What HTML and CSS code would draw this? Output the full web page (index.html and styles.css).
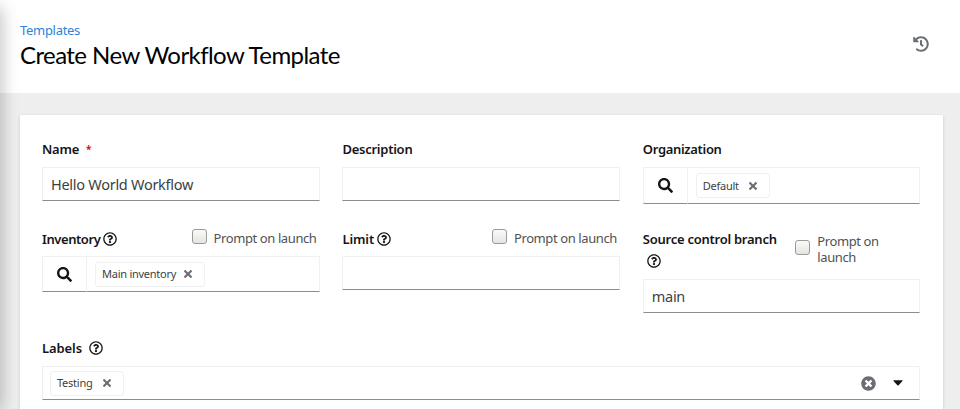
FILE: index.html
```html
<!DOCTYPE html>
<html lang="en">
<head>
<meta charset="utf-8">
<title>Create New Workflow Template</title>
<link rel="stylesheet" href="styles.css">
</head>
<body>
<svg class="sprite" aria-hidden="true">
  <symbol id="search" viewBox="0 0 512 512"><path d="M505 442.7L405.3 343c-4.5-4.5-10.6-7-17-7H372c27.6-35.3 44-79.7 44-128C416 93.1 322.9 0 208 0S0 93.1 0 208s93.1 208 208 208c48.3 0 92.7-16.4 128-44v16.3c0 6.4 2.5 12.5 7 17l99.7 99.7c9.4 9.4 24.6 9.4 33.9 0l28.3-28.3c9.4-9.4 9.4-24.6.1-34zM208 336c-70.7 0-128-57.2-128-128 0-70.7 57.2-128 128-128 70.7 0 128 57.2 128 128 0 70.7-57.2 128-128 128z"/></symbol>
  <symbol id="times" viewBox="0 80 352 352"><path d="M242.72 256l100.07-100.07c12.28-12.28 12.28-32.19 0-44.48l-22.24-22.24c-12.28-12.28-32.19-12.28-44.48 0L176 189.28 75.93 89.21c-12.28-12.28-32.19-12.28-44.48 0L9.21 111.45c-12.28 12.28-12.28 32.19 0 44.48L109.28 256 9.21 356.07c-12.28 12.28-12.28 32.19 0 44.48l22.24 22.24c12.28 12.28 32.2 12.28 44.48 0L176 322.72l100.07 100.07c12.28 12.28 32.2 12.28 44.48 0l22.24-22.24c12.28-12.28 12.28-32.19 0-44.48L242.72 256z"/></symbol>
  <symbol id="times-circle" viewBox="0 0 512 512"><path d="M256 8C119 8 8 119 8 256s111 248 248 248 248-111 248-248S393 8 256 8zm121.6 313.1c4.7 4.7 4.7 12.3 0 17L338 377.6c-4.7 4.7-12.3 4.7-17 0L256 312l-65.1 65.6c-4.7 4.7-12.3 4.7-17 0L134.4 338c-4.7-4.7-4.7-12.3 0-17l65.6-65-65.6-65.1c-4.7-4.7-4.7-12.3 0-17l39.6-39.6c4.7-4.7 12.3-4.7 17 0l65 65.7 65.1-65.6c4.7-4.7 12.3-4.7 17 0l39.6 39.6c4.7 4.7 4.7 12.3 0 17L312 256l65.6 65.1z"/></symbol>
  <symbol id="question" viewBox="0 0 512 512"><path d="M256 8C119.043 8 8 119.083 8 256c0 136.997 111.043 248 248 248s248-111.003 248-248C504 119.083 392.957 8 256 8zm0 448c-110.532 0-200-89.431-200-200 0-110.495 89.472-200 200-200 110.491 0 200 89.471 200 200 0 110.53-89.431 200-200 200zm107.244-255.2c0 67.052-72.421 68.084-72.421 92.863V300c0 6.627-5.373 12-12 12h-45.647c-6.627 0-12-5.373-12-12v-8.659c0-35.745 27.1-50.034 47.579-61.516 17.561-9.845 28.324-16.541 28.324-29.579 0-17.246-21.999-28.693-39.784-28.693-23.189 0-33.894 10.977-48.942 29.969-4.057 5.12-11.46 6.071-16.666 2.124l-27.824-21.098c-5.107-3.872-6.251-11.066-2.644-16.363C184.846 131.491 214.94 112 261.794 112c49.071 0 101.45 38.304 101.45 88.8zM298 368c0 23.159-18.841 42-42 42s-42-18.841-42-42 18.841-42 42-42 42 18.841 42 42z"/></symbol>
  <symbol id="history" viewBox="0 0 512 512"><path d="M504 255.531c.253 136.64-111.18 248.372-247.82 248.468-59.015.042-113.223-20.53-155.822-54.911-11.077-8.94-11.905-25.541-1.839-35.607l11.267-11.267c8.609-8.609 22.353-9.551 31.891-1.984C173.062 425.135 212.781 440 256 440c101.705 0 184-82.311 184-184 0-101.705-82.311-184-184-184-48.814 0-93.149 18.969-126.068 49.932l50.754 50.754c10.08 10.08 2.941 27.314-11.313 27.314H24c-8.837 0-16-7.163-16-16V38.627c0-14.254 17.234-21.393 27.314-11.314l49.372 49.372C129.209 34.136 189.552 8 256 8c136.81 0 247.747 110.78 248 247.531zm-180.912 78.784l9.823-12.63c8.138-10.463 6.253-25.542-4.21-33.679L288 256.349V152c0-13.255-10.745-24-24-24h-16c-13.255 0-24 10.745-24 24v135.651l65.409 50.874c10.463 8.137 25.541 6.253 33.679-4.21z"/></symbol>
  <symbol id="caret" viewBox="0 0 10 6"><path d="M.8.3h8.4q.8.2.3.8L5.6 5.2q-.6.6-1.2 0L.5 1.100Q0 .5.8.3z"/></symbol>
</svg>
<header class="header">
  <div>
    <a class="crumb">Templates</a>
    <h1 class="title">Create New Workflow Template</h1>
  </div>
  <svg class="icon history"><use href="#history"/></svg>
</header>
<main class="card">
  <div class="field">
    <div class="head first"><label class="label">Name</label><span class="required">*</span></div>
    <div class="control"><span class="value">Hello World Workflow</span></div>
  </div>
  <div class="field">
    <div class="head first"><label class="label">Description</label></div>
    <div class="control"></div>
  </div>
  <div class="field">
    <div class="head first"><label class="label org">Organization</label></div>
    <div class="lookup org-lookup">
      <button class="search"><svg class="icon"><use href="#search"/></svg></button>
      <div class="chips"><span class="chip chip-default"><span class="chip-text">Default</span><svg class="icon times"><use href="#times"/></svg></span></div>
    </div>
  </div>

  <div class="field">
    <div class="head"><label class="label inventory">Inventory</label><svg class="icon help"><use href="#question"/></svg>
      <label class="prompt"><span class="box"></span><span class="prompt-text">Prompt on launch</span></label></div>
    <div class="lookup">
      <button class="search"><svg class="icon"><use href="#search"/></svg></button>
      <div class="chips"><span class="chip chip-main"><span class="chip-text">Main inventory</span><svg class="icon times"><use href="#times"/></svg></span></div>
    </div>
  </div>
  <div class="field">
    <div class="head"><label class="label limit">Limit</label><svg class="icon help"><use href="#question"/></svg>
      <label class="prompt"><span class="box"></span><span class="prompt-text">Prompt on launch</span></label></div>
    <div class="control"></div>
  </div>
  <div class="field">
    <div class="head tall">
      <div class="stack"><label class="label source">Source control branch</label><svg class="icon help"><use href="#question"/></svg></div>
      <label class="prompt wrapped"><span class="box"></span><span class="prompt-text">Prompt on launch</span></label></div>
    <div class="control"><span class="value main">main</span></div>
  </div>

  <div class="field wide">
    <div class="head first"><label class="label labels">Labels</label><svg class="icon help"><use href="#question"/></svg></div>
    <div class="control select">
      <span class="chip chip-testing"><span class="chip-text">Testing</span><svg class="icon times"><use href="#times"/></svg></span>
      <svg class="icon clear"><use href="#times-circle"/></svg>
      <svg class="icon caret"><use href="#caret"/></svg>
    </div>
  </div>
</main>
<div class="edge"></div>
</body>
</html>
```
FILE: styles.css
```css
* { box-sizing: border-box; }
html { height: 409px; overflow: hidden; }
body {
  margin: 0;
  height: 409px;
  overflow: hidden;
  background: #eeeeee;
  color: #151515;
  font-family: "Noto Sans", "Open Sans", sans-serif;
}
.sprite { display: none; }
.icon { display: block; flex: none; width: 14px; height: 14px; fill: currentColor; }
.header {
  display: flex;
  justify-content: space-between;
  height: 93px;
  padding: 21px 31px 0 20px;
  background: #fff;
}
.crumb { display: block; font-size: 13px; line-height: 18px; letter-spacing: -0.3px; color: #2b83d9; }
.title {
  margin: 1px 0 0;
  font-family: Lato, sans-serif;
  font-size: 24px;
  font-weight: 400;
  line-height: 30px;
  letter-spacing: -0.57px;
  white-space: nowrap;
  color: #000;
}
.history { width: 16px; height: 16px; margin-top: 15px; color: #6a6e73; }
.card {
  display: grid;
  grid-template-columns: repeat(3, 277.500px);
  grid-template-rows: 89px 110px 63px;
  column-gap: 22.900px;
  margin: 22px 17px 0 20px;
  height: 294px;
  padding: 23px 22px 0;
  background: #fff;
  box-shadow: 0 1px 3px rgba(3, 3, 3, .16);
}
.wide { grid-column: 1 / 4; }
.head { display: flex; align-items: center; height: 29px; padding-bottom: 6px; }
.first { padding-bottom: 8px; }
.label { font-size: 13px; font-weight: 600; line-height: 20px; letter-spacing: -0.25px; white-space: nowrap; }
.org { letter-spacing: -0.32px; }
.inventory { letter-spacing: -0.42px; }
.limit { letter-spacing: -0.1px; }
.required { margin: 0 0 0 7px; color: #c9190b; font-size: 10px; font-weight: 700; line-height: 18px; }
.help { width: 14px; height: 14px; margin-left: 3px; }
.labels + .help { margin-left: 7px; }
.labels { letter-spacing: -0.1px; }
.control, .lookup {
  display: flex;
  align-items: center;
  height: 34px;
  border: 1px solid #f0f0f0;
  border-bottom-color: #8a8d90;
  background: #fff;
}
.lookup { height: 36px; border: 0; }
.org-lookup { height: 37px; }
.value { padding-left: 8px; font-size: 14.500px; letter-spacing: -0.28px; color: #3c3f42; }
.search {
  display: grid;
  place-items: center;
  width: 44px;
  height: 100%;
  padding: 0;
  border: 1px solid #f0f0f0;
  border-right: 0;
  border-bottom-color: #8a8d90;
  background: #fff;
  color: #151515;
}
.search .icon { width: 15px; height: 15px; }
.chips {
  display: flex;
  align-items: center;
  flex: 1;
  height: 100%;
  padding-left: 8px;
  border: 1px solid #f0f0f0;
  border-bottom-color: #8a8d90;
}
.chip {
  display: flex;
  align-items: center;
  justify-content: space-between;
  height: 25px;
  padding: 0 12px 0 6px;
  border: 1px solid #f0f0f0;
  border-radius: 3px;
}
.chip-default { width: 74px; }
.chip-main { width: 110px; }
.chip-testing { width: 74px; margin-left: 7px; }
.chip-text { font-size: 11px; line-height: 16px; letter-spacing: -0.25px; white-space: nowrap; color: #3c3f42; }
.times { width: 8px; height: 8px; color: #6a6e73; }
.prompt { display: flex; align-items: center; gap: 7px; margin: -2px 3px 0 auto; }
.prompt-text { font-size: 13px; line-height: 16px; letter-spacing: -0.4px; white-space: nowrap; color: #4f5255; }
.box {
  width: 15px;
  height: 15px;
  margin-bottom: 3px;
  border: 1px solid #9b9b96;
  border-radius: 3px;
  background: linear-gradient(#fafafa, #e4e4e2);
}
.tall { height: 52px; align-items: flex-start; padding: 0; }
.stack { padding-top: 2px; }
.stack .help { margin: 4px 0 0 4px; }
.stack .label { display: block; line-height: 21px; letter-spacing: -0.25px; }
.wrapped { margin: 6px 40px 0 auto; }
.wrapped .box { margin: 0 0 4px; }
.wrapped .prompt-text { width: 63px; white-space: normal; }
.clear { margin-left: auto; color: #6a6e73; width: 15px; height: 15px; }
.caret { width: 10px; height: 6px; margin: 0 16px 0 17px; }
.edge {
  position: absolute;
  top: 10px;
  bottom: 0;
  left: -10px;
  width: 10px;
  box-shadow: 0 0 16px 2px rgba(3, 3, 3, .26);
}
```
